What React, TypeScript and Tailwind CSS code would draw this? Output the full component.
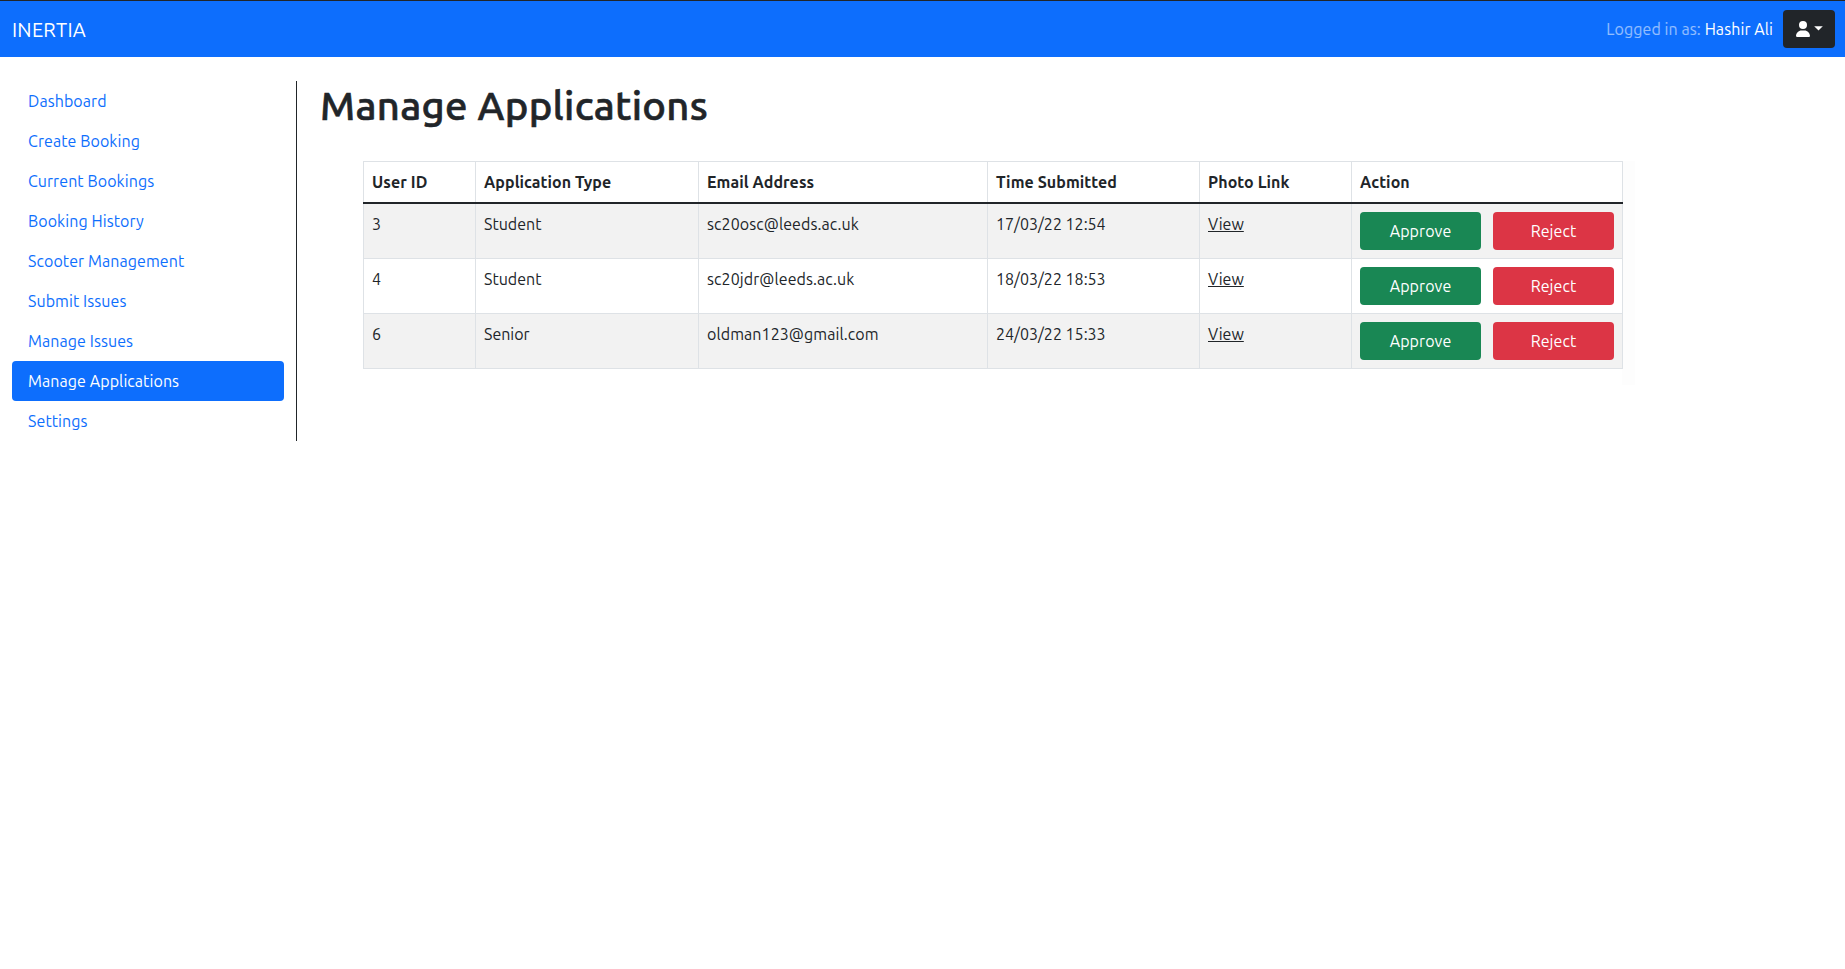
const navItems = [
  "Dashboard",
  "Create Booking",
  "Current Bookings",
  "Booking History",
  "Scooter Management",
  "Submit Issues",
  "Manage Issues",
  "Manage Applications",
  "Settings",
];

const columns = [
  { label: "User ID", width: "w-[112px]" },
  { label: "Application Type", width: "w-[223px]" },
  { label: "Email Address", width: "w-[289px]" },
  { label: "Time Submitted", width: "w-[212px]" },
  { label: "Photo Link", width: "w-[152px]" },
  { label: "Action", width: "w-[271px]" },
];

const applications = [
  { id: 3, type: "Student", email: "sc20osc@leeds.ac.uk", time: "17/03/22 12:54" },
  { id: 4, type: "Student", email: "sc20jdr@leeds.ac.uk", time: "18/03/22 18:53" },
  { id: 6, type: "Senior", email: "oldman123@gmail.com", time: "24/03/22 15:33" },
];

function PersonIcon() {
  return (
    <svg width="14" height="16" viewBox="0 0 448 512" fill="currentColor">
      <path d="M224 256A128 128 0 1 0 224 0a128 128 0 1 0 0 256zm-45.7 48C79.8 304 0 383.8 0 482.3C0 498.7 13.3 512 29.7 512H418.3c16.4 0 29.7-13.3 29.7-29.7C448 383.8 368.2 304 269.7 304H178.3z" />
    </svg>
  );
}

function Header() {
  return (
    <header className="flex h-[57px] items-center justify-between border-t border-[#212529] bg-[#0d6efd] pr-[10px] pl-3 text-white">
      <a className="pt-px text-xl leading-[30px] tracking-[0.25px]">INERTIA</a>
      <div className="flex items-center">
        <span className="mr-[10px] text-white/55">
          Logged in as: <span className="text-white">Hashir Ali</span>
        </span>
        <button className="flex h-[38px] w-[52px] items-center rounded-[4px] bg-[#212529] pl-[13px]">
          <PersonIcon />
          <svg className="mb-0.5 ml-[4px]" width="9" height="5" viewBox="0 0 9 5" fill="currentColor">
            <path d="M0.2 0.3h8.6l-4.3 4.3z" />
          </svg>
        </button>
      </div>
    </header>
  );
}

function Sidebar() {
  return (
    <nav className="flex w-[297px] flex-col border-r border-[#212529] pr-3 pl-3">
      {navItems.map((item) => (
        <a
          key={item}
          className={
            item === "Manage Applications"
              ? "rounded-[4px] bg-[#0d6efd] px-4 py-2 text-white"
              : "px-4 py-2 text-[#0d6efd]"
          }
        >
          {item}
        </a>
      ))}
    </nav>
  );
}

function ApplicationsTable() {
  return (
    <table className="w-[1259px] table-fixed border-collapse text-left">
      <thead>
        <tr>
          {columns.map((c) => (
            <th
              key={c.label}
              className={`${c.width} border border-b-2 border-[#dee2e6] border-b-[#212529] p-2 font-bold`}
            >
              {c.label}
            </th>
          ))}
        </tr>
      </thead>
      <tbody>
        {applications.map((a) => (
          <tr key={a.id} className="odd:bg-[#f2f2f2]">
            <td className="border border-[#dee2e6] p-2 align-top">{a.id}</td>
            <td className="border border-[#dee2e6] p-2 align-top tracking-normal">{a.type}</td>
            <td className="border border-[#dee2e6] p-2 align-top">{a.email}</td>
            <td className="border border-[#dee2e6] p-2 align-top tracking-normal">{a.time}</td>
            <td className="border border-[#dee2e6] p-2 align-top tracking-normal">
              <a className="underline">View</a>
            </td>
            <td className="border border-[#dee2e6] p-2 align-top">
              <div className="flex gap-3 text-white">
                <button className="h-[38px] flex-1 rounded-[4px] bg-[#198754]">Approve</button>
                <button className="h-[38px] flex-1 rounded-[4px] bg-[#dc3545]">Reject</button>
              </div>
            </td>
          </tr>
        ))}
      </tbody>
    </table>
  );
}

export default function App() {
  return (
    <div className="min-h-screen bg-white font-[Ubuntu,'Noto_Sans',sans-serif] text-base tracking-[0.08px] text-[#212529]">
      <Header />
      <div className="flex items-start pt-6">
        <Sidebar />
        <main className="flex-1 pt-px pl-[23px]">
          <h1 className="text-[40px] leading-[48px] font-medium tracking-[0.3px] [-webkit-text-stroke:0.6px_#212529]">
            Manage Applications
          </h1>
          <div className="mt-[31px] ml-[43px] w-[1272px] bg-linear-to-r from-white from-99% to-[#fdfdfd] to-99% pb-4">
            <ApplicationsTable />
          </div>
        </main>
      </div>
    </div>
  );
}
